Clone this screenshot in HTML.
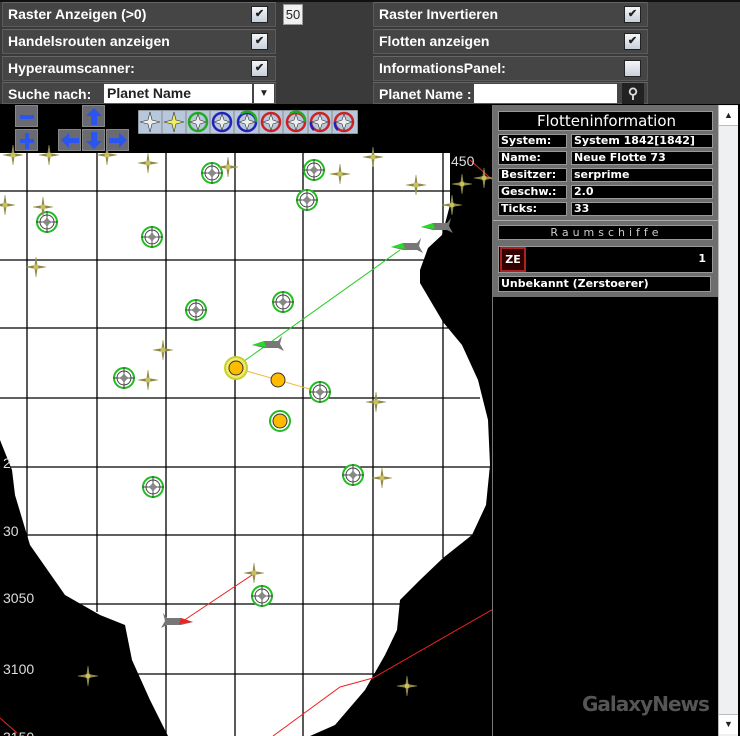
<!DOCTYPE html>
<html><head><meta charset="utf-8"><style>
*{margin:0;padding:0;box-sizing:border-box}
body{width:740px;height:736px;overflow:hidden;background:#000;position:relative;font-family:"Liberation Sans",sans-serif}
.top{position:absolute;left:0;top:0;width:740px;height:104px;background:#3a3a3a}
.row{position:absolute;height:25px;background:#454545;border:1px solid #5a5a5a;border-top-color:#666;color:#fff;font-weight:bold;font-size:14px;line-height:22px;padding-left:5px}
.cb{position:absolute;width:17px;height:17px;background:linear-gradient(#f4f6f8,#c8d0dc);border:1px solid #222;top:3px;font-size:11px;line-height:15px;text-align:center;color:#222}
.btn{position:absolute;width:23px;height:22px;background:#6a6a72;border:1px solid #888}
.btn svg{position:absolute;left:0;top:0}
.pnl{position:absolute;left:493px;top:105px;width:225px;height:192px;background:#6e6e6e}
.bx{position:absolute;background:#000;border:1px solid #999;color:#fff;font-family:"DejaVu Sans",sans-serif;font-weight:bold;font-size:11px;line-height:12px;padding-left:2px}
</style></head><body>
<div class="top"></div>
<div style="position:absolute;left:0;top:0;width:740px;height:2px;background:#111"></div>
<div class="row" style="left:2px;top:2px;width:274px">Raster Anzeigen (&gt;0)<div class="cb" style="left:248px">✔</div></div>
<div class="row" style="left:2px;top:29px;width:274px">Handelsrouten anzeigen<div class="cb" style="left:248px">✔</div></div>
<div class="row" style="left:2px;top:56px;width:274px">Hyperaumscanner:<div class="cb" style="left:248px">✔</div></div>
<div class="row" style="left:2px;top:82px;width:274px;height:22px">Suche nach:
<div style="position:absolute;left:101px;top:1px;width:148px;height:19px;background:#fff;color:#222;font-size:14px;line-height:19px;padding-left:3px">Planet Name</div>
<div style="position:absolute;left:251px;top:1px;width:20px;height:19px;background:#fff;color:#222;font-size:10px;text-align:center;line-height:19px">▼</div></div>
<div style="position:absolute;left:283px;top:4px;width:20px;height:21px;background:#f0f0f0;border:1px solid #999;font-size:13px;line-height:19px;text-align:center;color:#222">50</div>
<div class="row" style="left:373px;top:2px;width:275px">Raster Invertieren<div class="cb" style="left:250px">✔</div></div>
<div class="row" style="left:373px;top:29px;width:275px">Flotten anzeigen<div class="cb" style="left:250px">✔</div></div>
<div class="row" style="left:373px;top:56px;width:275px">InformationsPanel:<div class="cb" style="left:250px"></div></div>
<div class="row" style="left:373px;top:82px;width:275px;height:22px">Planet Name :
<div style="position:absolute;left:100px;top:1px;width:143px;height:19px;background:#fff"></div>
<div style="position:absolute;left:248px;top:0;width:22px;height:21px;background:#222;color:#ddd;text-align:center;font-size:14px;line-height:20px">⚲</div></div>

<svg style="position:absolute;left:0;top:104px" width="493" height="632" viewBox="0 104 493 632">
<defs>
<g id="p"><circle r="10" stroke="#2b2" stroke-width="2" fill="#fff"/><circle r="7" stroke="#444" stroke-width="1" fill="none"/><path d="M-11 0H11M0-11V11" stroke="#444" fill="none"/><path d="M0-5L2-2 5 0 2 2 0 5-2 2-5 0-2-2Z" fill="#888"/></g>
<g id="s"><path d="M0-10L1.2-1.5 10 0 1.2 1.5 0 10-1.2 1.5-10 0-1.2-1.5Z" fill="#8a8440" stroke="#9a9450" stroke-width=".6"/><circle r="2.5" fill="#c8c060"/></g>
<g id="sh"><path d="M-18 0L-6-4 8-4 12-9 10-1 14 6 8 3-6 3Z" fill="#777"/><path d="M-18 0L-6-4-4 2Z" fill="#2d2"/></g>
</defs>
<rect x="0" y="104" width="493" height="632" fill="#000"/>
<path d="M0 153 L450 153 L450 205 L442 235 L428 248 L420 270 L420 283 L443 322 L462 345 L478 380 L488 420 L490 465 L486 505 L472 535 L443 558 L420 580 L400 600 L397 630 L385 655 L365 690 L335 725 L310 736 L168 736 L150 700 L132 660 L125 625 L100 615 L65 595 L30 545 L15 495 L12 470 L0 440 Z" fill="#fff"/>
<g stroke="#000" stroke-width="1.3">
<line x1="27" y1="153" x2="27" y2="545"/><line x1="97" y1="153" x2="97" y2="612"/><line x1="166" y1="153" x2="166" y2="736"/><line x1="235" y1="153" x2="235" y2="736"/><line x1="303" y1="153" x2="303" y2="736"/><line x1="373" y1="153" x2="373" y2="690"/><line x1="443" y1="153" x2="443" y2="558"/>
<line x1="0" y1="191" x2="450" y2="191"/><line x1="0" y1="260" x2="425" y2="260"/><line x1="0" y1="328" x2="450" y2="328"/><line x1="0" y1="398" x2="480" y2="398"/><line x1="0" y1="467" x2="490" y2="467"/><line x1="20" y1="535" x2="480" y2="535"/><line x1="60" y1="604" x2="405" y2="604"/><line x1="130" y1="674" x2="375" y2="674"/>
</g>
<g stroke="#e22" stroke-width="1" fill="none">
<polyline points="495,608 373,678 340,687 273,736"/><polyline points="470,160 495,182"/><polyline points="0,718 17,733"/>
<line x1="255" y1="573" x2="180" y2="623"/></g>
<line x1="400" y1="250" x2="240" y2="364" stroke="#2c2" stroke-width="1"/>
<polyline points="236,368 278,380 320,392" stroke="#eb3" fill="none"/>
<use href="#p" x="212" y="173"/><use href="#p" x="314" y="170"/><use href="#p" x="307" y="200"/><use href="#p" x="47" y="222"/><use href="#p" x="152" y="237"/><use href="#p" x="196" y="310"/><use href="#p" x="283" y="302"/><use href="#p" x="124" y="378"/><use href="#p" x="320" y="392"/><use href="#p" x="353" y="475"/><use href="#p" x="153" y="487"/><use href="#p" x="262" y="596"/>
<circle cx="280" cy="421" r="10" stroke="#2b2" stroke-width="2" fill="#fff"/><circle cx="280" cy="421" r="7" fill="#fb0" stroke="#333"/>
<circle cx="236" cy="368" r="11" fill="#ee6" stroke="#cc3" stroke-width="2"/><circle cx="236" cy="368" r="7" fill="#fb0" stroke="#333"/>
<circle cx="278" cy="380" r="7" fill="#fb0" stroke="#333"/>
<use href="#s" x="148" y="163"/><use href="#s" x="228" y="167"/><use href="#s" x="340" y="174"/><use href="#s" x="416" y="185"/><use href="#s" x="462" y="184"/><use href="#s" x="484" y="178"/><use href="#s" x="452" y="205"/><use href="#s" x="5" y="205"/><use href="#s" x="43" y="207"/><use href="#s" x="36" y="267"/><use href="#s" x="163" y="350"/><use href="#s" x="148" y="380"/><use href="#s" x="376" y="402"/><use href="#s" x="382" y="478"/><use href="#s" x="254" y="573"/><use href="#s" x="88" y="676"/><use href="#s" x="407" y="686"/><use href="#s" x="13" y="155"/><use href="#s" x="49" y="155"/><use href="#s" x="107" y="155"/><use href="#s" x="373" y="157"/>
<use href="#sh" x="439" y="227"/><use href="#sh" x="409" y="247"/><use href="#sh" x="270" y="345"/>
<g transform="translate(175,622) scale(-1,1)"><path d="M-18 0L-6-4 8-4 12-9 10-1 14 6 8 3-6 3Z" fill="#777"/><path d="M-18 0L-6-4-4 2Z" fill="#e22"/></g>
<g fill="#ddd" font-family="Liberation Sans" font-size="14"><text x="451" y="166">450</text><text x="3" y="468">2</text><text x="3" y="536">30</text><text x="3" y="603">3050</text><text x="3" y="674">3100</text><text x="3" y="742">3150</text></g>
</svg>

<div class="btn" style="left:15px;top:105px"><svg width="22" height="21"><rect x="4" y="9" width="14" height="4" fill="#2a55ee"/></svg></div>
<div class="btn" style="left:15px;top:129px"><svg width="22" height="21"><path d="M4 9h14v4H4zM9 3h4v16H9z" fill="#2a55ee"/></svg></div>
<div class="btn" style="left:82px;top:105px"><svg width="22" height="21"><path d="M11 2L19 10H14V19H8V10H3Z" fill="#2a55ee"/></svg></div>
<div class="btn" style="left:58px;top:129px"><svg width="22" height="21"><path d="M2 10L10 3V8H20V13H10V18Z" fill="#2a55ee"/></svg></div>
<div class="btn" style="left:82px;top:129px"><svg width="22" height="21"><path d="M11 19L19 11H14V2H8V11H3Z" fill="#2a55ee"/></svg></div>
<div class="btn" style="left:106px;top:129px"><svg width="22" height="21"><path d="M20 10L12 3V8H2V13H12V18Z" fill="#2a55ee"/></svg></div>
<svg style="position:absolute;left:138px;top:110px" width="220" height="24">
<rect width="220" height="24" fill="#b8c8dc" stroke="#666"/>
<g stroke-width="2.5" fill="none">
<circle cx="60" cy="12" r="9" stroke="#2a2"/><circle cx="84" cy="12" r="9" stroke="#22b"/><circle cx="109" cy="12" r="9" stroke="#22b"/><path d="M103 4 A9 9 0 0 1 118 12" stroke="#2a2"/>
<circle cx="133" cy="12" r="9" stroke="#c22"/><circle cx="158" cy="12" r="9" stroke="#c22"/><path d="M152 4 A9 9 0 0 1 167 12" stroke="#2a2"/>
<circle cx="182" cy="12" r="9" stroke="#c22"/><path d="M176 20 A9 9 0 0 1 173 12" stroke="#22b"/><circle cx="206" cy="12" r="9" stroke="#c22"/><path d="M200 20 A9 9 0 0 1 197 12" stroke="#22b"/></g>
<g fill="#eee" stroke="#333" stroke-width=".6"><path d="M12 2L14 10 22 12 14 14 12 22 10 14 2 12 10 10Z"/><path d="M36 2L38 10 46 12 38 14 36 22 34 14 26 12 34 10Z" fill="#ee6"/>
<path d="M60 4L62 10 68 12 62 14 60 20 58 14 52 12 58 10Z"/><path d="M84 4L86 10 92 12 86 14 84 20 82 14 76 12 82 10Z"/><path d="M109 4L111 10 117 12 111 14 109 20 107 14 101 12 107 10Z"/><path d="M133 4L135 10 141 12 135 14 133 20 131 14 125 12 131 10Z"/><path d="M158 4L160 10 166 12 160 14 158 20 156 14 150 12 156 10Z"/><path d="M182 4L184 10 190 12 184 14 182 20 180 14 174 12 180 10Z"/><path d="M206 4L208 10 214 12 208 14 206 20 204 14 198 12 204 10Z"/></g>
<path d="M24 0V24M48 0V24M72 0V24M96 0V24M121 0V24M145 0V24M170 0V24M194 0V24" stroke="#888"/>
</svg>

<div style="position:absolute;left:492px;top:105px;width:226px;height:631px;background:#000;border-left:1px solid #777"></div>
<div class="pnl"></div>
<div class="bx" style="left:498px;top:111px;width:215px;height:20px;font-weight:normal;font-size:15px;line-height:18px;text-align:center">Flotteninformation</div>
<div class="bx" style="left:498px;top:134px;width:69px;height:14px">System:</div><div class="bx" style="left:571px;top:134px;width:142px;height:14px">System 1842[1842]</div>
<div class="bx" style="left:498px;top:151px;width:69px;height:14px">Name:</div><div class="bx" style="left:571px;top:151px;width:142px;height:14px">Neue Flotte 73</div>
<div class="bx" style="left:498px;top:168px;width:69px;height:14px">Besitzer:</div><div class="bx" style="left:571px;top:168px;width:142px;height:14px">serprime</div>
<div class="bx" style="left:498px;top:185px;width:69px;height:14px">Geschw.:</div><div class="bx" style="left:571px;top:185px;width:142px;height:14px">2.0</div>
<div class="bx" style="left:498px;top:202px;width:69px;height:14px">Ticks:</div><div class="bx" style="left:571px;top:202px;width:142px;height:14px">33</div>
<div style="position:absolute;left:493px;top:220px;width:225px;height:1px;background:#aaa"></div>
<div class="bx" style="left:498px;top:225px;width:215px;height:15px;font-weight:normal;color:#ccc;letter-spacing:4px;text-align:center;line-height:13px">Raumschiffe</div>
<div class="bx" style="left:498px;top:246px;width:215px;height:27px;text-align:right;padding-right:6px;line-height:24px">1</div>
<div style="position:absolute;left:500px;top:247px;width:26px;height:25px;background:#300;border:2px solid #a22;color:#fff;font-weight:bold;font-size:11px;text-align:center;line-height:21px;font-family:'DejaVu Sans',sans-serif">ZE</div>
<div class="bx" style="left:498px;top:276px;width:213px;height:16px;line-height:14px">Unbekannt (Zerstoerer)</div>
<div style="position:absolute;left:718px;top:105px;width:20px;height:631px;background:#eef0f2;border-left:1px solid #bbb"></div>
<div style="position:absolute;left:719px;top:106px;width:19px;height:20px;background:#fff;border-bottom:1px solid #bbb;font-size:9px;text-align:center;line-height:18px;color:#222">▲</div>
<div style="position:absolute;left:719px;top:714px;width:19px;height:20px;background:#fff;border-top:1px solid #bbb;font-size:9px;text-align:center;line-height:18px;color:#222">▼</div>
<div style="position:absolute;left:582px;top:692px;font-family:'DejaVu Sans',sans-serif;font-weight:bold;font-size:20px;color:#555;letter-spacing:-1px">GalaxyNews</div>
</body></html>
